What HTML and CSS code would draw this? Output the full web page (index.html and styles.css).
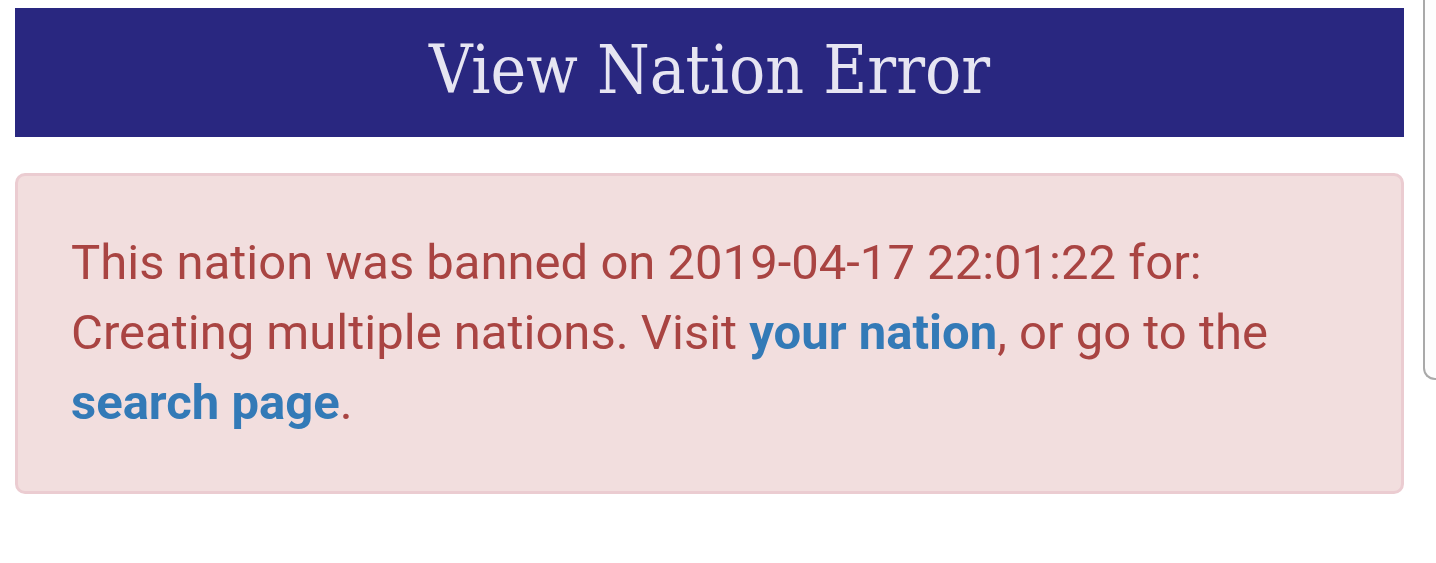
FILE: index.html
```html
<!DOCTYPE html>
<html lang="en">
<head>
<meta charset="utf-8">
<title>View Nation Error</title>
<link rel="stylesheet" href="styles.css">
</head>
<body>
<div class="page">
  <header class="banner">
    <h1 class="banner-title">View Nation Error</h1>
  </header>
  <div class="alert">
    This nation was banned on 2019-04-17 22:01:22 for: Creating multiple nations. Visit <a class="alert-link" href="#">your nation</a>, or go to the <a class="alert-link" href="#">search page</a>.
  </div>
</div>
<div class="edge-panel"></div>
</body>
</html>
```
FILE: styles.css
```css
html, body {
  margin: 0;
  padding: 0;
  background: #ffffff;
}
body {
  font-family: Roboto, "Liberation Sans", sans-serif;
}
.page {
  padding: 8px 32px 0 15px;
  display: flex;
  flex-direction: column;
  gap: 36px;
}
.banner {
  background: #292780;
  height: 129px;
  display: flex;
  align-items: center;
  justify-content: center;
}
.banner-title {
  margin: 0;
  font-family: "DejaVu Serif Condensed", "DejaVu Serif", "Liberation Serif", serif;
  font-stretch: condensed;
  font-weight: normal;
  font-size: 67px;
  line-height: 1;
  color: #e6e5f2;
  letter-spacing: 0;
  padding-bottom: 4px;
}
.alert {
  background: #f2dede;
  border: 3px solid #ebccd1;
  border-radius: 10px;
  color: #a94442;
  font-size: 49px;
  line-height: 70px;
  padding: 52px 52px 53px 53px;
}
.alert-link {
  color: #337ab7;
  font-weight: bold;
  text-decoration: none;
}
.edge-panel {
  position: absolute;
  top: -10px;
  left: 1423px;
  width: 40px;
  height: 388px;
  border-left: 2px solid #a9a9a9;
  border-bottom: 2px solid #a9a9a9;
  border-bottom-left-radius: 12px;
  background: #fdfdfd;
}
```
